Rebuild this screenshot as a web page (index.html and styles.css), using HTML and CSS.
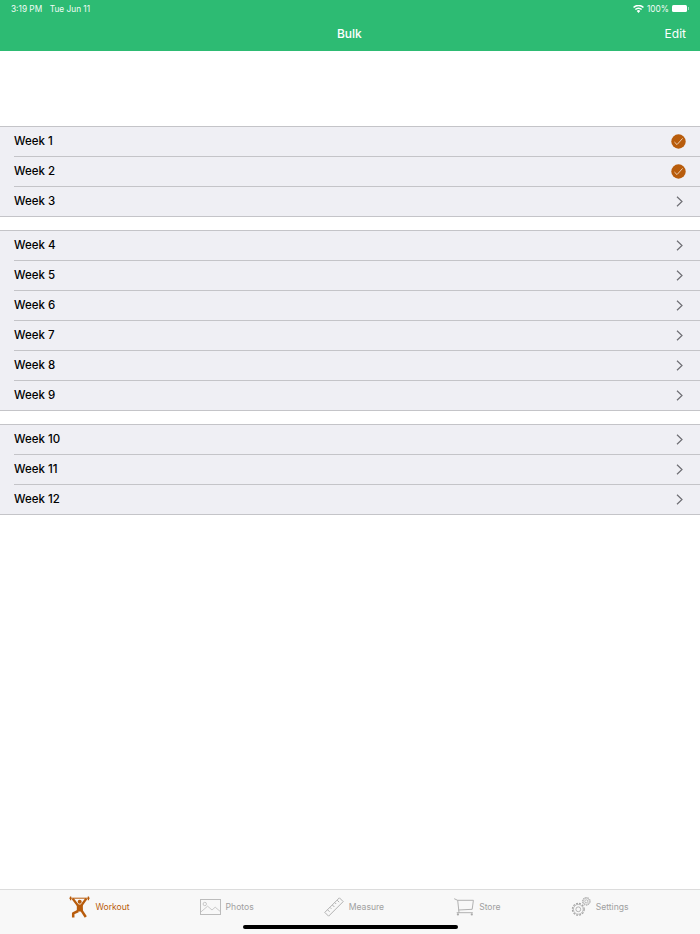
FILE: index.html
```html
<!DOCTYPE html>
<html lang="en">
<head>
<meta charset="utf-8">
<title>Bulk</title>
<link rel="stylesheet" href="styles.css">
</head>
<body>
<div class="app">
  <header class="header">
    <div class="status">
      <span class="status-time">3:19 PM</span>
      <span class="status-date">Tue Jun 11</span>
      <span class="status-right">
        <svg class="wifi" width="11" height="8" viewBox="0 0 11 8"><path d="M5.5 8 3.7 5.9a2.6 2.6 0 0 1 3.6 0zM2.9 5.1 1.8 3.9a5.3 5.3 0 0 1 7.4 0L8.1 5.1a3.8 3.8 0 0 0-5.2 0zM1.1 3.1 0 1.9a8 8 0 0 1 11 0L9.9 3.1a6.4 6.4 0 0 0-8.8 0z" fill="#fff"/></svg>
        <span>100%</span>
        <span class="battery"></span><span class="battery-tip"></span>
      </span>
    </div>
    <div class="nav">
      <span class="nav-spacer"></span>
      <span class="nav-title">Bulk</span>
      <span class="nav-edit">Edit</span>
    </div>
  </header>

  <main class="main">
    <section class="section">
      <div class="row"><span>Week 1</span><svg class="check" width="15" height="15" viewBox="0 0 15 15"><circle cx="7.5" cy="7.5" r="7.2" fill="#b85c0c"/><path d="M3.4 8 6 10.6 11.6 4.4" fill="none" stroke="#ecd0b6" stroke-width="1"/></svg></div>
      <div class="row"><span>Week 2</span><svg class="check" width="15" height="15" viewBox="0 0 15 15"><circle cx="7.5" cy="7.5" r="7.2" fill="#b85c0c"/><path d="M3.4 8 6 10.6 11.6 4.4" fill="none" stroke="#ecd0b6" stroke-width="1"/></svg></div>
      <div class="row"><span>Week 3</span><svg class="chev" width="7" height="11" viewBox="0 0 7 11"><path d="M1 .7 6 5.5 1 10.3" fill="none" stroke="#6f6f74" stroke-width="1.2"/></svg></div>
    </section>
    <section class="section">
      <div class="row"><span>Week 4</span><svg class="chev" width="7" height="11" viewBox="0 0 7 11"><path d="M1 .7 6 5.5 1 10.3" fill="none" stroke="#6f6f74" stroke-width="1.2"/></svg></div>
      <div class="row"><span>Week 5</span><svg class="chev" width="7" height="11" viewBox="0 0 7 11"><path d="M1 .7 6 5.5 1 10.3" fill="none" stroke="#6f6f74" stroke-width="1.2"/></svg></div>
      <div class="row"><span>Week 6</span><svg class="chev" width="7" height="11" viewBox="0 0 7 11"><path d="M1 .7 6 5.5 1 10.3" fill="none" stroke="#6f6f74" stroke-width="1.2"/></svg></div>
      <div class="row"><span>Week 7</span><svg class="chev" width="7" height="11" viewBox="0 0 7 11"><path d="M1 .7 6 5.5 1 10.3" fill="none" stroke="#6f6f74" stroke-width="1.2"/></svg></div>
      <div class="row"><span>Week 8</span><svg class="chev" width="7" height="11" viewBox="0 0 7 11"><path d="M1 .7 6 5.5 1 10.3" fill="none" stroke="#6f6f74" stroke-width="1.2"/></svg></div>
      <div class="row"><span>Week 9</span><svg class="chev" width="7" height="11" viewBox="0 0 7 11"><path d="M1 .7 6 5.5 1 10.3" fill="none" stroke="#6f6f74" stroke-width="1.2"/></svg></div>
    </section>
    <section class="section">
      <div class="row"><span>Week 10</span><svg class="chev" width="7" height="11" viewBox="0 0 7 11"><path d="M1 .7 6 5.5 1 10.3" fill="none" stroke="#6f6f74" stroke-width="1.2"/></svg></div>
      <div class="row"><span>Week 11</span><svg class="chev" width="7" height="11" viewBox="0 0 7 11"><path d="M1 .7 6 5.5 1 10.3" fill="none" stroke="#6f6f74" stroke-width="1.2"/></svg></div>
      <div class="row"><span>Week 12</span><svg class="chev" width="7" height="11" viewBox="0 0 7 11"><path d="M1 .7 6 5.5 1 10.3" fill="none" stroke="#6f6f74" stroke-width="1.2"/></svg></div>
    </section>
  </main>

  <footer class="tabbar">
    <div class="tab tab-active">
      <svg width="21" height="22" viewBox="0 0 21 22"><g fill="none" stroke="#b85c0c" stroke-linejoin="round"><path d="M.3 2.2H20.7" stroke-width="1"/><path d="M1.6 .4V4.2M19.4 .4V4.2" stroke-width="1.3"/><path d="M3.7 2.6 9 9.6M17.3 2.6 12.3 9.6" stroke-width="2.4"/><path d="M9.2 15 4.2 17.4V21.4M12.6 14.6 16.8 21" stroke-width="2.5"/></g><circle cx="10.7" cy="5.8" r="2" fill="#b85c0c"/><path d="M7.8 8.6H13.8L14 15.4H7.8z" fill="#b85c0c"/></svg>
      <span>Workout</span>
    </div>
    <div class="tab">
      <svg width="21" height="16" viewBox="0 0 21 16"><g fill="none" stroke="#bcbcbc"><rect x=".5" y=".5" width="20" height="15"/><circle cx="4.8" cy="5" r="1.7" stroke-width=".8"/><path d="M.8 13 7.6 7.2 12 11 15.2 8.2 20.4 12.6" stroke-width=".8"/></g></svg>
      <span>Photos</span>
    </div>
    <div class="tab">
      <svg width="20" height="20" viewBox="0 0 20 20"><g fill="none" stroke="#a9a9a9" stroke-width=".9"><path d="M.8 15.4 15.4.8 19.2 4.6 4.6 19.2z"/><path d="M3.6 12.8 5.6 14.8M6 10.4 7.4 11.8M8.4 8 10.4 10M10.8 5.6 12.2 7M13.2 3.2 15.2 5.2"/></g></svg>
      <span>Measure</span>
    </div>
    <div class="tab tab-store">
      <svg width="21" height="18" viewBox="0 0 21 18"><g fill="none" stroke="#a9a9a9" stroke-width=".9"><path d="M.2 .7 3.7 2.3 5 14.7"/><path d="M3.7 2.3H19.4L18.2 11.3 4.5 12"/><path d="M2.7 14.7H18.8"/></g><circle cx="3.9" cy="16.4" r="1.1" fill="#a9a9a9"/><circle cx="17.8" cy="16.4" r="1.1" fill="#a9a9a9"/></svg>
      <span>Store</span>
    </div>
    <div class="tab">
      <svg width="20" height="20" viewBox="0 0 20 20"><g fill="none" stroke="#a3a3a3"><circle cx="7.3" cy="12.3" r="5.9" stroke-width="1.2" stroke-dasharray="1.9 1.2"/><circle cx="7.3" cy="12.3" r="4.9" stroke-width=".7"/><circle cx="7.3" cy="12.3" r="2.4" stroke-width=".8"/><circle cx="15.3" cy="4.3" r="3.9" stroke-width="1" stroke-dasharray="1.5 .9"/><circle cx="15.3" cy="4.3" r="3.1" stroke-width=".6"/><circle cx="15.3" cy="4.3" r="1.5" stroke-width=".7"/></g></svg>
      <span>Settings</span>
    </div>
    <div class="home-indicator"></div>
  </footer>
</div>
</body>
</html>
```
FILE: styles.css
```css
* {
  box-sizing: border-box;
}

html,
body {
  margin: 0;
  height: 100%;
}

body {
  font-family: Inter, "Liberation Sans", sans-serif;
  background: #fff;
  color: #000;
}

.app {
  display: flex;
  flex-direction: column;
  height: 934px;
  overflow: hidden;
}

.header {
  height: 51px;
  flex: none;
  background: #2dbb73;
  color: #fff;
}

.status {
  height: 17px;
  display: flex;
  align-items: center;
  padding: 0 11px 0 11px;
  font-size: 8.3px;
  color: #f2fbf6;
}

.status-date {
  margin-left: 7.5px;
}

.status-right {
  margin-left: auto;
  display: flex;
  align-items: center;
  gap: 3px;
}

.battery {
  width: 15px;
  height: 7px;
  border-radius: 1.5px;
  background: #fff;
}

.battery-tip {
  width: 1.5px;
  height: 3px;
  margin-left: -2.5px;
  background: rgba(255, 255, 255, .5);
}

.nav {
  height: 33px;
  display: flex;
  align-items: center;
  justify-content: space-between;
  padding: 0 14px 0 14px;
}

.nav-spacer {
  width: 20px;
}

.nav-title {
  font-size: 12px;
  font-weight: 500;
}

.nav-edit {
  font-size: 12px;
  font-weight: 400;
}

.main {
  flex: 1;
  padding-top: 75px;
  display: flex;
  flex-direction: column;
  gap: 13px;
}

.section {
  background: #efeff4;
  border-top: 1px solid #c4c4c8;
}

.row {
  height: 30px;
  margin-left: 14px;
  padding-right: 14px;
  display: flex;
  align-items: center;
  justify-content: space-between;
  border-bottom: 1px solid #c4c4c8;
  font-size: 11.5px;
  font-weight: 500;
}

.row span {
  padding-bottom: 2px;
}

.row:last-child {
  margin-left: 0;
  padding-left: 14px;
}

.check {
  display: block;
}

.chev {
  display: block;
  margin-right: 3px;
}

.tabbar {
  position: relative;
  height: 45px;
  flex: none;
  background: #f8f8f8;
  border-top: 1px solid #dcdcdc;
  display: flex;
  justify-content: center;
  padding: 6px 2px 0 0;
  gap: 70px;
}

.tab {
  height: 22px;
  display: flex;
  align-items: center;
  gap: 5px;
  font-size: 8.6px;
  color: #a0a0a0;
}

.tab span {
  padding-bottom: 1px;
}

.tab-store {
  gap: 4px;
}

.tab-active {
  color: #b85c0c;
}

.home-indicator {
  position: absolute;
  left: 243px;
  bottom: 5px;
  width: 215px;
  height: 4px;
  border-radius: 2px;
  background: #000;
}
```
